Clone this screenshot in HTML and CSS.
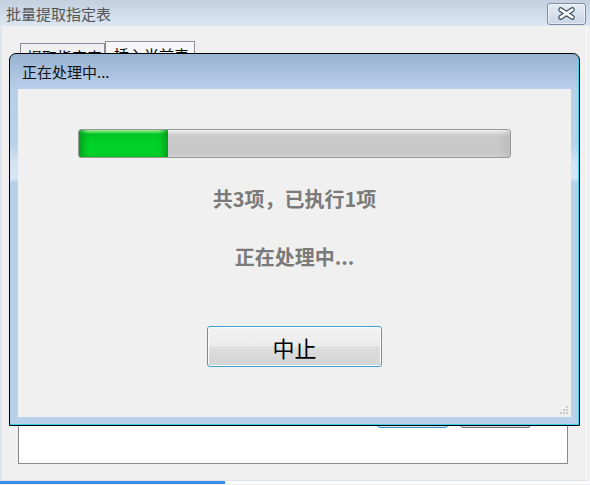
FILE: index.html
```html
<!DOCTYPE html>
<html lang="zh">
<head>
    <meta charset="UTF-8">
    <title>批量提取指定表</title>
    <link rel="stylesheet" href="styles.css">
</head>
<body>
    <div class="window">
        <div class="titlebar">
            <span class="title">批量提取指定表</span>
            <button class="close">
                <svg width="38" height="21" viewBox="0 0 38 21">
                    <path d="M13 6.5 L25 14.5 M25 6.5 L13 14.5" stroke="#3b4b60" stroke-width="5" stroke-linecap="round"/>
                    <path d="M13 6.5 L25 14.5 M25 6.5 L13 14.5" stroke="#fff" stroke-width="2.6" stroke-linecap="round"/>
                </svg>
            </button>
        </div>

        <div class="body">
            <div class="tabs">
                <div class="tab">提取指定表</div>
                <div class="tab active">插入当前表</div>
            </div>
            <div class="panel">
                <div class="panel-buttons">
                    <button class="btn primary">确定</button>
                    <button class="btn">取消</button>
                </div>
            </div>
        </div>

        <div class="taskbar">
            <div class="taskbar-active"></div>
            <div class="taskbar-rest"></div>
        </div>

        <!-- Ventana de progreso encima -->
        <div class="dialog">
            <div class="dialog-title">正在处理中...</div>
            <div class="dialog-content">
                <div class="progress">
                    <div class="progress-fill" style="width: 89px"></div>
                </div>
                <div class="status first">共3项，已执行1项</div>
                <div class="status second">正在处理中...</div>
                <button class="stop">中止</button>
                <svg class="grip" width="9" height="9" viewBox="0 0 9 9">
                    <rect x="6" y="0" width="2" height="2" fill="#c9c9c9"/>
                    <rect x="3" y="3" width="2" height="2" fill="#c9c9c9"/>
                    <rect x="6" y="3" width="2" height="2" fill="#c9c9c9"/>
                    <rect x="0" y="6" width="2" height="2" fill="#c9c9c9"/>
                    <rect x="3" y="6" width="2" height="2" fill="#c9c9c9"/>
                    <rect x="6" y="6" width="2" height="2" fill="#c9c9c9"/>
                </svg>
            </div>
        </div>
    </div>
</body>
</html>
```

FILE: styles.css
```css
body {
    margin: 0;
    font-family: "Noto Sans CJK SC", "Noto Sans", sans-serif;
    background: #f0f0f0;
}

.window {
    position: relative;
    width: 590px;
    height: 485px;
    background: #f0f0f0;
    overflow: hidden;
}

.titlebar {
    height: 26px;
    display: flex;
    align-items: center;
    justify-content: space-between;
    padding: 0 4px 0 6px;
    background: linear-gradient(#c2d0df, #dbe6f2);
}

.title {
    font-size: 15px;
    color: #555;
    line-height: 1;
}

.close {
    width: 39px;
    height: 22px;
    padding: 0;
    margin-top: 1px;
    border: 1px solid #7f8ea3;
    border-radius: 3px;
    background: linear-gradient(#e4ebf4, #c9d6e6);
    box-shadow: inset 0 0 0 1px rgba(255, 255, 255, 0.5);
    display: flex;
    align-items: center;
    justify-content: center;
}

.body {
    height: 455px;
    box-sizing: border-box;
    border-left: 2px solid #dfe5ed;
    border-right: 1px solid #fafafa;
    border-bottom: 1px solid #dde3ea;
    padding: 15px 0 0 16px;
    width: 587px;
}

.tabs {
    display: flex;
    align-items: flex-end;
    margin-left: 2px;
    height: 22px;
}

.tab {
    box-sizing: border-box;
    height: 20px;
    width: 85px;
    border: 1px solid #8b8e96;
    border-bottom: none;
    font-size: 15px;
    line-height: 26px;
    padding-left: 6px;
    overflow: hidden;
    background: #f0f0f0;
}

.tab.active {
    height: 22px;
    width: 90px;
    background: #f7f7f7;
    padding-left: 8px;
}

.panel {
    width: 550px;
    height: 401px;
    box-sizing: border-box;
    border: 1px solid #8a8a8a;
    background: #fff;
    display: flex;
    flex-direction: column;
    justify-content: flex-end;
}

.panel-buttons {
    display: flex;
    justify-content: flex-end;
    gap: 12px;
    padding-right: 36px;
    margin-bottom: 35px;
}

.btn {
    width: 71px;
    height: 23px;
    border: 1px solid #707070;
    border-radius: 3px;
    background: linear-gradient(#f2f2f2, #dcdcdc);
    font-size: 13px;
}

.btn.primary {
    border-color: #2c9fd6;
}

.taskbar {
    display: flex;
    height: 3px;
}

.taskbar-active {
    width: 225px;
    background: #3a8fe8;
}

.taskbar-rest {
    flex: 1;
    background: #fff;
}

.dialog {
    position: absolute;
    left: 9px;
    top: 53px;
    width: 571px;
    height: 373px;
    box-sizing: border-box;
    border: 1px solid #000;
    border-radius: 7px 7px 0 0;
    padding: 0 8px 8px 8px;
    background: linear-gradient(#98b2d1 0, #b8cfe9 35px, #bad1ea 90px, #d6e5f5 110px, #d6e5f5 125px, #b9d0ea 128px, #b9d0ea 100%);
    box-shadow: inset -1px -1px 0 #39d0ee;
}

.dialog-title {
    height: 35px;
    display: flex;
    align-items: center;
    padding-left: 4px;
    font-size: 15px;
    color: #111;
}

.dialog-content {
    position: relative;
    height: 328px;
    background: #f0f0f0;
    display: flex;
    flex-direction: column;
    align-items: center;
    padding-top: 40px;
    box-sizing: border-box;
}

.progress {
    width: 433px;
    height: 29px;
    box-sizing: border-box;
    border: 1px solid #999;
    border-radius: 3px;
    overflow: hidden;
    background:
        linear-gradient(to right, transparent 97%, rgba(0, 0, 0, 0.06)),
        linear-gradient(#f2f2f2 0, #dadada 3px, #c9c9c9 6px, #c8c8c8 85%, #cfcfcf 100%);
}

.progress-fill {
    height: 100%;
    background: linear-gradient(#a4f4a4 0, #62e062 2px, #00c424 4px, #00d32a 60%, #00cc28 100%);
    box-shadow: inset 9px 0 6px -5px #009d1c, inset -9px 0 6px -5px #009d1c;
}

.status {
    font-size: 20px;
    font-weight: bold;
    color: #7a7a7a;
    line-height: 24px;
}

.status.first {
    margin-top: 29px;
}

.status.second {
    margin-top: 34px;
}

.stop {
    margin-top: 57px;
    width: 175px;
    height: 41px;
    border: 1px solid #3a9fda;
    border-radius: 3px;
    background: linear-gradient(#f3f3f3 0, #ebebeb 48%, #dedede 52%, #d3d3d3 100%);
    box-shadow: inset 0 0 0 1px #fbfbfb;
    font-family: "Noto Sans CJK SC", sans-serif;
    font-size: 22px;
    color: #000;
    padding: 0;
}

.grip {
    position: absolute;
    right: 2px;
    bottom: 2px;
}
```
